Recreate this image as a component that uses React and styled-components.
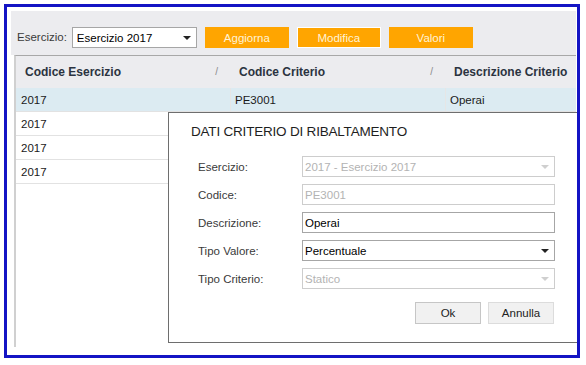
import React from 'react';
import styled, { createGlobalStyle } from 'styled-components';

const GlobalStyle = createGlobalStyle`
  html, body {
    margin: 0;
    padding: 0;
    background: #ffffff;
    font-family: "Liberation Sans", Arial, sans-serif;
  }
`;

const Frame = styled.div`
  position: relative;
  box-sizing: border-box;
  width: 576px;
  height: 354px;
  margin: 4px 0 0 4px;
  padding: 4px 1px 4px 4px;
  border: 3px solid #1414c4;
  background: #ffffff;
  overflow: hidden;
`;

const Panel = styled.div`
  display: flex;
  flex-direction: column;
  height: 100%;
`;

const Toolbar = styled.div`
  display: flex;
  align-items: flex-start;
  gap: 8px;
  box-sizing: border-box;
  height: 44px;
  padding: 16px 0 0 6px;
  background: #ececef;
`;

const ToolLabel = styled.span`
  margin: 4px -3px 0 0;
  font-size: 11.5px;
  color: #3a3a3a;
`;

const Select = styled.div`
  display: flex;
  flex-shrink: 0;
  align-items: center;
  justify-content: space-between;
  box-sizing: border-box;
  width: ${p => p.$width || 125}px;
  height: 21px;
  padding: ${p => (p.$compact ? '0 5px 0 2px' : '0 5px 0 4px')};
  background: #ffffff;
  border: 1px solid ${p => (p.$disabled ? '#cdcdcd' : '#a6a6a6')};
  font-size: 11.5px;
  color: ${p => (p.$disabled ? '#b3b3b3' : '#000000')};
`;

const Arrow = styled.span`
  width: 0;
  height: 0;
  border-left: 4px solid transparent;
  border-right: 4px solid transparent;
  border-top: 4px solid ${p => (p.$disabled ? '#cfcfcf' : '#222222')};
`;

const OrangeButton = styled.div`
  display: flex;
  align-items: center;
  justify-content: center;
  box-sizing: border-box;
  width: 84px;
  height: 21px;
  background: #ffa500;
  border: 1px solid ${p => (p.$active ? '#ffffff' : '#ffa500')};
  font-size: 11.5px;
  color: #fff3d6;
`;

const Grid = styled.div`
  flex: 1;
  margin: 0 0 4px 3px;
  border-left: 2px solid #d0d0d0;
  border-top: 1px solid #a8a8a8;
  background: #ffffff;
`;

const Row = styled.div`
  display: grid;
  grid-template-columns: 214px 215px 200px;
  height: ${p => (p.$header ? 32 : 24)}px;
  box-sizing: border-box;
  background: ${p => (p.$header ? '#ececef' : p.$selected ? '#dcebf2' : '#ffffff')};
  border-bottom: 1px solid ${p => (p.$header ? '#ececef' : '#e2e2e2')};
`;

const Cell = styled.div`
  display: flex;
  align-items: center;
  justify-content: space-between;
  padding: ${p => (p.$header ? '0 12px 0 8px' : '0 4px')};
  font-size: ${p => (p.$header ? 12 : 11.5)}px;
  font-weight: ${p => (p.$header ? 700 : 400)};
  color: ${p => (p.$header ? '#2b3340' : '#1a1a1a')};
  border-left: 1px solid ${p => (p.$first ? 'transparent' : p.$header ? '#ececef' : '#e6e6e6')};
  white-space: nowrap;
`;

const SortMark = styled.span`
  font-weight: 400;
  font-size: 10px;
  color: #8a8a8a;
`;

const Dialog = styled.div`
  position: absolute;
  left: 161px;
  top: 105px;
  box-sizing: border-box;
  width: 411px;
  height: 231px;
  padding: 11px 24px 0 29px;
  background: #ffffff;
  border: 1px solid #6e6e6e;
`;

const Title = styled.div`
  margin: 0 0 17px -7px;
  font-size: 13.5px;
  color: #1e1e1e;
  letter-spacing: -0.2px;
`;

const FormRow = styled.div`
  display: flex;
  align-items: center;
  height: 21px;
  margin-bottom: 7px;
`;

const FieldLabel = styled.span`
  width: 104px;
  flex-shrink: 0;
  font-size: 11.5px;
  color: #3a3a3a;
`;

const Input = styled.div`
  display: flex;
  flex-shrink: 0;
  align-items: center;
  box-sizing: border-box;
  width: 253px;
  height: 21px;
  padding: 0 2px;
  border: 1px solid ${p => (p.$disabled ? '#cdcdcd' : '#a6a6a6')};
  font-size: 11.5px;
  color: ${p => (p.$disabled ? '#b3b3b3' : '#000000')};
`;

const Actions = styled.div`
  display: flex;
  justify-content: flex-end;
  gap: 7px;
  margin-top: 13px;
`;

const Button = styled.div`
  display: flex;
  align-items: center;
  justify-content: center;
  box-sizing: border-box;
  width: 66px;
  height: 22px;
  background: #f1f1f1;
  border: 1px solid ${p => (p.$focus ? '#c6c6c6' : '#dcdcdc')};
  font-size: 11.5px;
  color: #222222;
`;

const rows = [
  { anno: '2017', codice: 'PE3001', descr: 'Operai', selected: true },
  { anno: '2017' },
  { anno: '2017' },
  { anno: '2017' },
];

export default function App() {
  return (
    <>
      <GlobalStyle />
      <Frame>
        <Panel>
          <Toolbar>
            <ToolLabel>Esercizio:</ToolLabel>
            <Select>
              <span>Esercizio 2017</span>
              <Arrow />
            </Select>
            <OrangeButton>Aggiorna</OrangeButton>
            <OrangeButton $active>Modifica</OrangeButton>
            <OrangeButton>Valori</OrangeButton>
          </Toolbar>
          <Grid>
            <Row $header>
              <Cell $header $first>
                Codice Esercizio<SortMark>/</SortMark>
              </Cell>
              <Cell $header>
                Codice Criterio<SortMark>/</SortMark>
              </Cell>
              <Cell $header>Descrizione Criterio</Cell>
            </Row>
            {rows.map((r, i) => (
              <Row key={i} $selected={r.selected}>
                <Cell $first>{r.anno}</Cell>
                <Cell>{r.codice}</Cell>
                <Cell>{r.descr}</Cell>
              </Row>
            ))}
          </Grid>
        </Panel>
        <Dialog>
          <Title>DATI CRITERIO DI RIBALTAMENTO</Title>
          <FormRow>
            <FieldLabel>Esercizio:</FieldLabel>
            <Select $disabled $compact $width={253}>
              <span>2017 - Esercizio 2017</span>
              <Arrow $disabled />
            </Select>
          </FormRow>
          <FormRow>
            <FieldLabel>Codice:</FieldLabel>
            <Input $disabled>PE3001</Input>
          </FormRow>
          <FormRow>
            <FieldLabel>Descrizione:</FieldLabel>
            <Input>Operai</Input>
          </FormRow>
          <FormRow>
            <FieldLabel>Tipo Valore:</FieldLabel>
            <Select $compact $width={253}>
              <span>Percentuale</span>
              <Arrow />
            </Select>
          </FormRow>
          <FormRow>
            <FieldLabel>Tipo Criterio:</FieldLabel>
            <Select $disabled $compact $width={253}>
              <span>Statico</span>
              <Arrow $disabled />
            </Select>
          </FormRow>
          <Actions>
            <Button $focus>Ok</Button>
            <Button>Annulla</Button>
          </Actions>
        </Dialog>
      </Frame>
    </>
  );
}
